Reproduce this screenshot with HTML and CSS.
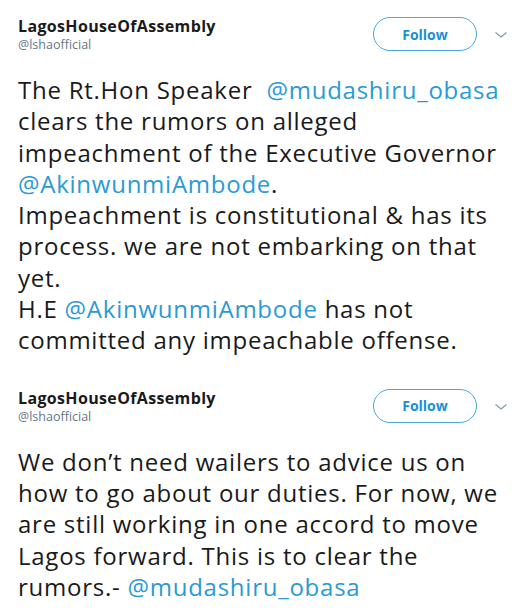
FILE: index.html
```html
<!DOCTYPE html>
<html>
<head>
<meta charset="utf-8">
<link rel="stylesheet" href="styles.css">
</head>
<body>
<article class="tweet">
  <header class="head">
    <div class="who">
      <div class="name">LagosHouseOfAssembly</div>
      <div class="handle">@lshaofficial</div>
    </div>
    <button class="follow">Follow</button>
    <svg class="chev" width="12" height="8" viewBox="0 0 12 8"><path d="M0.5 1.5 L6 6 L11.5 1.5" fill="none" stroke="#8899a6" stroke-width="1.2"/></svg>
  </header>
  <p class="text">The Rt.Hon Speaker&nbsp; <a class="at">@mudashiru_obasa</a><br>clears the rumors on alleged<br>impeachment of the Executive Governor<br><a class="at">@AkinwunmiAmbode</a>.<br>Impeachment is constitutional &amp; has its<br>process. we are not embarking on that<br>yet.<br>H.E <a class="at">@AkinwunmiAmbode</a> has not<br>committed any impeachable offense.</p>
</article>
<article class="tweet second">
  <header class="head">
    <div class="who">
      <div class="name">LagosHouseOfAssembly</div>
      <div class="handle">@lshaofficial</div>
    </div>
    <button class="follow">Follow</button>
    <svg class="chev" width="12" height="8" viewBox="0 0 12 8"><path d="M0.5 1.5 L6 6 L11.5 1.5" fill="none" stroke="#8899a6" stroke-width="1.2"/></svg>
  </header>
  <p class="text">We don’t need wailers to advice us on<br>how to go about our duties. For now, we<br>are still working in one accord to move<br>Lagos forward. This is to clear the<br>rumors.- <a class="at">@mudashiru_obasa</a></p>
</article>
</body>
</html>
```
FILE: styles.css
```css
html, body {
  margin: 0;
  padding: 0;
  background: #ffffff;
}
body {
  font-family: "Open Sans", "Noto Sans", sans-serif;
  color: #1a1a1a;
  width: 514px;
  height: 612px;
  overflow: hidden;
}
.tweet {
  padding: 16px 7px 0 18px;
}
.second {
  padding-top: 32px;
}
.head {
  display: flex;
  align-items: flex-start;
}
.who {
  flex: 1;
}
.name {
  font-weight: 700;
  font-size: 16px;
  line-height: 20px;
  letter-spacing: 0.35px;
}
.handle {
  font-size: 12.5px;
  line-height: 16px;
  color: #657786;
  margin-top: 1px;
}
.follow {
  width: 104px;
  height: 34px;
  margin-top: 1px;
  border: 1px solid #4aa8de;
  border-radius: 17px;
  background: #fff;
  color: #1b8fd6;
  font-family: "Open Sans", sans-serif;
  font-weight: 700;
  font-size: 14px;
  padding: 0;
}
.chev {
  margin: 15px 0 0 18px;
}
.text {
  margin: 21px 0 0 0;
  font-size: 24px;
  line-height: 31.3px;
  letter-spacing: 0.75px;
  white-space: nowrap;
}
.at {
  color: #2a9ad6;
  text-decoration: none;
}
```
